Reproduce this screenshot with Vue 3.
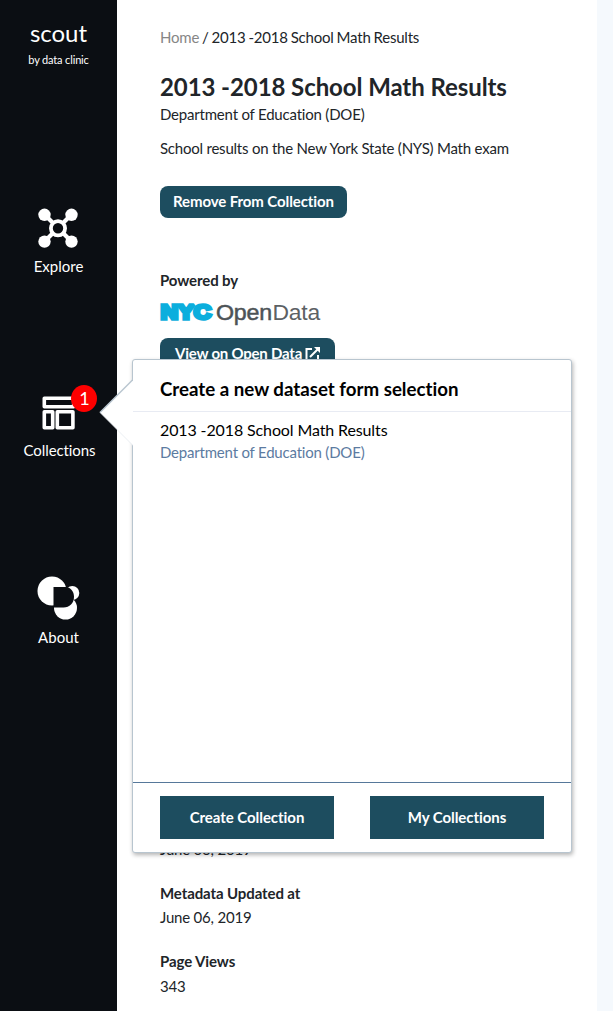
<script setup>
const dataset = {
  name: '2013 -2018 School Math Results',
  agency: 'Department of Education (DOE)',
  description: 'School results on the New York State (NYS) Math exam',
}
const facts = [
  { label: 'Metadata Updated at', value: 'June 06, 2019' },
  { label: 'Page Views', value: '343' },
]
</script>

<template>
  <div class="app">
    <nav class="sidebar">
      <div class="brand">scout</div>
      <div class="tagline">by data clinic</div>

      <a class="item explore">
        <svg width="40" height="40" viewBox="0 0 40 40">
          <path d="M6.500 6.500L33.500 33.500M33.500 6.500L6.500 33.500" stroke="#fff" stroke-width="4.200" />
          <g fill="#fff">
            <circle cx="6.500" cy="6.800" r="6.200" />
            <circle cx="33.500" cy="6.800" r="6.200" />
            <circle cx="6.500" cy="33.600" r="6.200" />
            <circle cx="33.500" cy="33.600" r="6.200" />
          </g>
          <circle cx="20" cy="20.300" r="7.100" fill="#0b0e13" stroke="#fff" stroke-width="3.800" />
        </svg>
        <span>Explore</span>
      </a>

      <a class="item collections">
        <div class="icon-wrap">
          <svg width="34" height="34" viewBox="0 0 34 34" fill="none" stroke="#fff" stroke-width="3.600" stroke-linejoin="round">
            <rect x="2.300" y="2.300" width="29.400" height="8.400" />
            <rect x="2.300" y="15.800" width="8.400" height="15.900" />
            <rect x="15.300" y="15.800" width="15.600" height="15.900" />
          </svg>
          <span class="badge">1</span>
        </div>
        <span>Collections</span>
      </a>

      <a class="item about">
        <svg width="44" height="44" viewBox="0 0 44 44">
          <circle cx="15" cy="15" r="14.500" fill="#fff" />
          <circle cx="35.300" cy="17" r="7" fill="#fff" />
          <circle cx="28.500" cy="32" r="11.500" fill="#fff" />
          <path d="M16.500 11H28.500C33.500 11 37 15.500 37 21C37 27 32.500 31.500 26.500 31.500H16.500Z" fill="#0b0e13" />
        </svg>
        <span>About</span>
      </a>
    </nav>

    <main class="content">
      <div class="crumbs"><a>Home</a> / {{ dataset.name }}</div>
      <h1>{{ dataset.name }}</h1>
      <div class="agency">{{ dataset.agency }}</div>
      <p class="description">{{ dataset.description }}</p>
      <button class="pill remove">Remove From Collection</button>

      <div class="strong powered">Powered by</div>
      <svg class="portal" width="162" height="24" viewBox="0 0 162 24">
        <g font-family="Liberation Sans, sans-serif">
          <text x="0.800" y="17" font-size="20" font-weight="700" fill="#0baedd" stroke="#0baedd" stroke-width="3.400" stroke-linejoin="miter" stroke-miterlimit="1.600" textLength="50" lengthAdjust="spacingAndGlyphs">NYC</text>
          <text x="56" y="18.200" font-size="22.500" fill="#4d5357" stroke="#4d5357" stroke-width=".5" textLength="56" lengthAdjust="spacingAndGlyphs">Open</text>
          <text x="112.500" y="18.200" font-size="22.500" fill="#5c6164" textLength="47.500" lengthAdjust="spacingAndGlyphs">Data</text>
        </g>
      </svg>
      <button class="pill view">
        <span>View on Open Data</span>
        <svg width="16" height="16" viewBox="0 0 16 16" fill="none" stroke="#fff" stroke-width="2">
          <path d="M7 3H1.500V14.500H13V9M5 11L13.500 2.500" />
          <path d="M9 1H15V7Z" fill="#fff" stroke="none" />
        </svg>
      </button>

      <div class="updated">June 06, 2019</div>
      <div v-for="fact in facts" :key="fact.label" class="fact">
        <div class="strong">{{ fact.label }}</div>
        <div class="value">{{ fact.value }}</div>
      </div>
    </main>

    <aside class="edge"></aside>

    <section class="popover">
      <svg class="arrow" width="34" height="70" viewBox="0 0 34 70">
        <path d="M34 1.500L1 34.500L34 67.500Z" fill="#fff" />
        <path d="M34 1.500L1 34.500" stroke="#b8c5cf" stroke-width="1.500" />
        <path d="M1 34.500L34 67.500" stroke="#e3e8ee" stroke-width=".7" />
      </svg>
      <h2>Create a new dataset form selection</h2>
      <div class="selection">
        <div class="name">{{ dataset.name }}</div>
        <div class="source">{{ dataset.agency }}</div>
      </div>
      <footer>
        <button>Create Collection</button>
        <button>My Collections</button>
      </footer>
    </section>
  </div>
</template>

<style>
body {
  margin: 0;
  overflow: hidden;
}
</style>

<style scoped>
.app {
  position: relative;
  display: flex;
  height: 1011px;
  overflow: hidden;
  background: #fff;
  color: #212529;
  font-family: Lato, sans-serif;
  font-size: 15px;
  line-height: 24px;
  letter-spacing: -.2px;
  font-variant-ligatures: none;
}
* {
  box-sizing: border-box;
}
.sidebar {
  display: flex;
  flex-direction: column;
  align-items: center;
  flex: 0 0 117px;
  background: #0b0e13;
  color: #fff;
  letter-spacing: 0;
}
.brand {
  margin-top: 17px;
  font-size: 24px;
  line-height: 32px;
}
.tagline {
  margin-top: 3px;
  font-size: 11px;
  line-height: 16px;
  letter-spacing: -.15px;
}
.item {
  display: flex;
  flex-direction: column;
  align-items: center;
}
.item svg {
  display: block;
}
.explore {
  margin-top: 140px;
}
.explore > span {
  margin-top: 6px;
}
.collections {
  margin-top: 118px;
  padding-left: 2px;
}
.collections > span {
  margin-top: 8px;
  letter-spacing: -.1px;
}
.icon-wrap {
  position: relative;
}
.badge {
  position: absolute;
  top: -11px;
  left: 29px;
  width: 26px;
  height: 27px;
  border-radius: 50%;
  background: #f00;
  font-size: 18px;
  line-height: 27px;
  text-align: center;
}
.about {
  margin-top: 114px;
}
.about > span {
  margin-top: 5px;
}
.content {
  flex: 1;
  padding: 25px 0 0 43px;
  white-space: nowrap;
}
.crumbs {
  word-spacing: -.75px;
}
.crumbs a {
  color: #868686;
}
h1 {
  margin: 23px 0 0;
  font-size: 24px;
  font-weight: 700;
  line-height: 30px;
  letter-spacing: -.08px;
}
.description {
  margin: 10px 0 26px;
  letter-spacing: -.22px;
}
button {
  display: block;
  border: 0;
  background: #1d4d5f;
  color: #fff;
  font: 700 15px/24px Lato, sans-serif;
  letter-spacing: -.05px;
  font-variant-ligatures: none;
}
.pill {
  height: 32px;
  padding: 0 13px 2px;
  border-radius: 8px;
  line-height: 30px;
}
.remove {
  width: 187px;
  letter-spacing: -.1px;
}
.strong {
  font-weight: 700;
  letter-spacing: -.1px;
}
.powered {
  margin-top: 50px;
}
.portal {
  display: block;
  overflow: visible;
  margin: 10px 0 12px;
}
.view {
  display: flex;
  align-items: center;
  width: 175px;
  padding: 0 0 2px 15px;
  gap: 3px;
  letter-spacing: -.22px;
}
.view svg {
  margin-top: 2px;
}
.updated {
  margin-top: 467px;
}
.fact {
  margin-top: 20px;
}
.fact + .fact .value {
  margin-top: 1px;
}
.edge {
  flex: 0 0 16px;
  background: #f5f9fd;
}
.popover {
  position: absolute;
  top: 359px;
  left: 132px;
  display: flex;
  flex-direction: column;
  width: 440px;
  height: 494px;
  border: 1px solid #b8c5cf;
  border-radius: 3px;
  background: #fff;
  box-shadow: 1px 2px 4px rgba(0, 0, 0, .3);
  color: #000;
}
.arrow {
  position: absolute;
  top: 18px;
  left: -34px;
}
h2 {
  height: 52px;
  margin: 0;
  padding-left: 27px;
  border-bottom: 1px solid #e8ebf3;
  font-size: 18.700px;
  font-weight: 700;
  line-height: 59px;
  letter-spacing: 0;
}
.selection {
  flex: 1;
  padding: 7px 27px;
  line-height: 22px;
}
.name {
  font-size: 16px;
  letter-spacing: -.12px;
}
.source {
  color: #5c7ba1;
}
footer {
  display: flex;
  justify-content: space-between;
  height: 70px;
  padding: 13px 27px 0;
  border-top: 1px solid #56789a;
}
footer button {
  width: 174px;
  height: 43px;
  padding: 0 0 2px;
}
</style>
